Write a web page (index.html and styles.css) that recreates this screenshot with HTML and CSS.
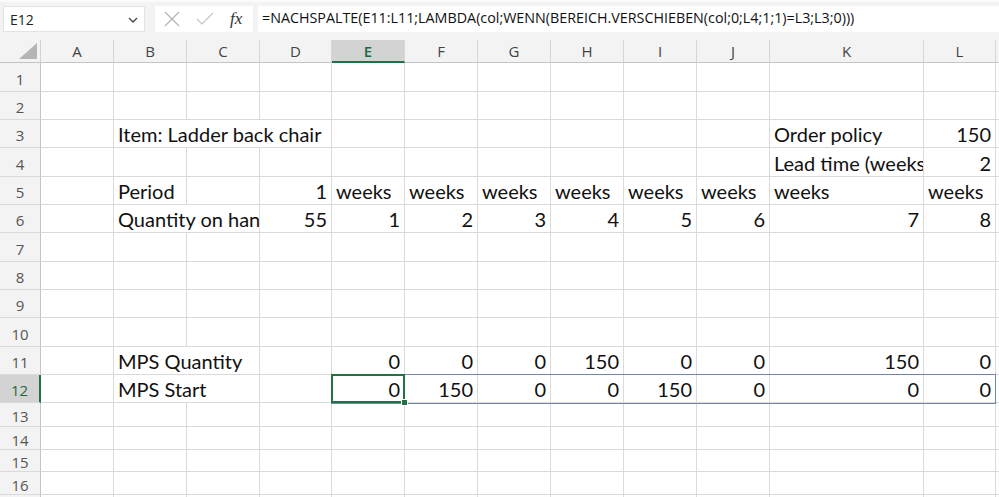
FILE: index.html
```html
<!DOCTYPE html>
<html lang="de">
<head>
<meta charset="utf-8">
<title>Excel</title>
<link rel="stylesheet" href="styles.css">
</head>
<body>
<div class="fbar">
  <div class="namebox">
    <span class="nb-text">E12</span>
    <svg class="chev" width="10" height="6" viewBox="0 0 10 6"><path d="M1 1 L5 5 L9 1" fill="none" stroke="#444" stroke-width="1.3"/></svg>
  </div>
  <div class="fxbox">
    <svg class="ico" width="16" height="16" viewBox="0 0 16 16"><path d="M1 1 L15 15 M15 1 L1 15" stroke="#b3b3b3" stroke-width="1.2" fill="none"/></svg>
    <svg class="ico" width="18" height="14" viewBox="0 0 18 14"><path d="M1 7 L6 12 L17 1" stroke="#c4c4c4" stroke-width="1.2" fill="none"/></svg>
    <span class="fx">fx</span>
  </div>
  <div class="formula">=NACHSPALTE(E11:L11;LAMBDA(col;WENN(BEREICH.VERSCHIEBEN(col;0;L4;1;1)=L3;L3;0)))</div>
</div>
<div class="sheet">
  <!-- header -->
  <div class="corner"><svg width="18" height="16" viewBox="0 0 18 16"><path d="M18 0 L18 16 L0 16 Z" fill="#b5b5b5"/></svg></div>
  <div class="ch">A</div><div class="ch">B</div><div class="ch">C</div><div class="ch">D</div>
  <div class="ch ch-sel">E</div><div class="ch">F</div><div class="ch">G</div><div class="ch">H</div>
  <div class="ch">I</div><div class="ch">J</div><div class="ch">K</div><div class="ch">L</div><div class="ch ch-end"></div>

  <!-- row 1 -->
  <div class="rh">1</div>
  <div class="c"></div><div class="c"></div><div class="c"></div><div class="c"></div><div class="c"></div><div class="c"></div>
  <div class="c"></div><div class="c"></div><div class="c"></div><div class="c"></div><div class="c"></div><div class="c"></div><div class="c e"></div>

  <!-- row 2 -->
  <div class="rh">2</div>
  <div class="c"></div><div class="c"></div><div class="c"></div><div class="c"></div><div class="c"></div><div class="c"></div>
  <div class="c"></div><div class="c"></div><div class="c"></div><div class="c"></div><div class="c"></div><div class="c"></div><div class="c e"></div>

  <!-- row 3 -->
  <div class="rh">3</div>
  <div class="c"></div><div class="c s3">Item: Ladder back chair</div>
  <div class="c"></div><div class="c"></div><div class="c"></div><div class="c"></div><div class="c"></div><div class="c"></div>
  <div class="c">Order policy</div><div class="c n">150</div><div class="c e"></div>

  <!-- row 4 -->
  <div class="rh">4</div>
  <div class="c"></div><div class="c"></div><div class="c"></div><div class="c"></div><div class="c"></div><div class="c"></div>
  <div class="c"></div><div class="c"></div><div class="c"></div><div class="c"></div>
  <div class="c">Lead time (weeks)</div><div class="c n">2</div><div class="c e"></div>

  <!-- row 5 -->
  <div class="rh">5</div>
  <div class="c"></div><div class="c">Period</div><div class="c"></div><div class="c n">1</div>
  <div class="c">weeks</div><div class="c">weeks</div><div class="c">weeks</div><div class="c">weeks</div>
  <div class="c">weeks</div><div class="c">weeks</div><div class="c">weeks</div><div class="c">weeks</div><div class="c e"></div>

  <!-- row 6 -->
  <div class="rh">6</div>
  <div class="c"></div><div class="c s2">Quantity on hand</div><div class="c n">55</div>
  <div class="c n">1</div><div class="c n">2</div><div class="c n">3</div><div class="c n">4</div>
  <div class="c n">5</div><div class="c n">6</div><div class="c n">7</div><div class="c n">8</div><div class="c e"></div>

  <!-- row 7 -->
  <div class="rh">7</div>
  <div class="c"></div><div class="c"></div><div class="c"></div><div class="c"></div><div class="c"></div><div class="c"></div>
  <div class="c"></div><div class="c"></div><div class="c"></div><div class="c"></div><div class="c"></div><div class="c"></div><div class="c e"></div>

  <!-- row 8 -->
  <div class="rh">8</div>
  <div class="c"></div><div class="c"></div><div class="c"></div><div class="c"></div><div class="c"></div><div class="c"></div>
  <div class="c"></div><div class="c"></div><div class="c"></div><div class="c"></div><div class="c"></div><div class="c"></div><div class="c e"></div>

  <!-- row 9 -->
  <div class="rh">9</div>
  <div class="c"></div><div class="c"></div><div class="c"></div><div class="c"></div><div class="c"></div><div class="c"></div>
  <div class="c"></div><div class="c"></div><div class="c"></div><div class="c"></div><div class="c"></div><div class="c"></div><div class="c e"></div>

  <!-- row 10 -->
  <div class="rh">10</div>
  <div class="c"></div><div class="c"></div><div class="c"></div><div class="c"></div><div class="c"></div><div class="c"></div>
  <div class="c"></div><div class="c"></div><div class="c"></div><div class="c"></div><div class="c"></div><div class="c"></div><div class="c e"></div>

  <!-- row 11 -->
  <div class="rh">11</div>
  <div class="c"></div><div class="c s2">MPS Quantity</div><div class="c"></div>
  <div class="c n">0</div><div class="c n">0</div><div class="c n">0</div><div class="c n">150</div>
  <div class="c n">0</div><div class="c n">0</div><div class="c n">150</div><div class="c n">0</div><div class="c e"></div>

  <!-- row 12 -->
  <div class="rh rh-sel">12</div>
  <div class="c"></div><div class="c s2">MPS Start</div><div class="c"></div>
  <div class="c n active">0<span class="spill"></span><span class="sel"></span><span class="handle"></span></div>
  <div class="c n">150</div><div class="c n">0</div><div class="c n">0</div>
  <div class="c n">150</div><div class="c n">0</div><div class="c n">0</div><div class="c n">0</div><div class="c e"></div>

  <!-- row 13 -->
  <div class="rh">13</div>
  <div class="c"></div><div class="c"></div><div class="c"></div><div class="c"></div><div class="c"></div><div class="c"></div>
  <div class="c"></div><div class="c"></div><div class="c"></div><div class="c"></div><div class="c"></div><div class="c"></div><div class="c e"></div>

  <!-- row 14 -->
  <div class="rh">14</div>
  <div class="c"></div><div class="c"></div><div class="c"></div><div class="c"></div><div class="c"></div><div class="c"></div>
  <div class="c"></div><div class="c"></div><div class="c"></div><div class="c"></div><div class="c"></div><div class="c"></div><div class="c e"></div>

  <!-- row 15 -->
  <div class="rh">15</div>
  <div class="c"></div><div class="c"></div><div class="c"></div><div class="c"></div><div class="c"></div><div class="c"></div>
  <div class="c"></div><div class="c"></div><div class="c"></div><div class="c"></div><div class="c"></div><div class="c"></div><div class="c e"></div>

  <!-- row 16 -->
  <div class="rh">16</div>
  <div class="c"></div><div class="c"></div><div class="c"></div><div class="c"></div><div class="c"></div><div class="c"></div>
  <div class="c"></div><div class="c"></div><div class="c"></div><div class="c"></div><div class="c"></div><div class="c"></div><div class="c e"></div>

  <!-- row 17 (only its top edge is in view) -->
  <div class="rh"></div>
  <div class="c"></div><div class="c"></div><div class="c"></div><div class="c"></div><div class="c"></div><div class="c"></div>
  <div class="c"></div><div class="c"></div><div class="c"></div><div class="c"></div><div class="c"></div><div class="c"></div><div class="c e"></div>
</div>
</body>
</html>
```
FILE: styles.css
```css
html, body {
  margin: 0;
  padding: 0;
}
body {
  width: 999px;
  height: 497px;
  overflow: hidden;
  background: #ffffff;
  font-family: Lato, "Liberation Sans", sans-serif;
}

/* formula bar */
.fbar {
  height: 40px;
  box-sizing: border-box;
  background: #f3f3f3;
  border-top: 2px solid #fbfbfb;
  padding: 4px 0 0 3px;
  display: flex;
  align-items: flex-start;
}
.namebox {
  width: 142px;
  height: 26px;
  box-sizing: border-box;
  background: #fff;
  border: 1px solid #e3e3e3;
  display: flex;
  align-items: center;
  justify-content: space-between;
  padding: 0 6px 0 6px;
}
.nb-text {
  font-family: "Open Sans", "Noto Sans", sans-serif;
  font-size: 14px;
  color: #222;
}
.chev {
  margin-top: 2px;
}
.fxbox {
  margin-left: 10px;
  width: 98px;
  height: 26px;
  box-sizing: border-box;
  background: #fff;
  display: flex;
  align-items: center;
  padding-left: 9px;
  gap: 16px;
}
.fx {
  font-family: "Liberation Serif", serif;
  font-style: italic;
  font-size: 17px;
  color: #333;
}
.formula {
  margin-left: 5px;
  flex: 1;
  height: 26px;
  box-sizing: border-box;
  background: #fff;
  padding-left: 4px;
  font-family: "Open Sans", "Noto Sans", sans-serif;
  font-size: 14.3px;
  line-height: 24px;
  color: #111;
  white-space: nowrap;
  overflow: hidden;
}

/* sheet grid */
.sheet {
  display: grid;
  grid-template-columns: 41px 73px 73px 73px 72px 73px 73px 73px 73px 73px 73px 154px 72px 1fr;
  grid-template-rows: 23px 29px 28px 28px 29px 28px 28px 29px 28px 28px 29px 28px 28px 24px 23px 22px 23px 23px;
}
.corner {
  background: #f3f3f3;
  border-right: 1px solid #d2d2d2;
  border-bottom: 1px solid #c4c4c4;
  display: flex;
  align-items: flex-end;
  justify-content: flex-end;
  padding: 0 3px 3px 0;
}
.ch {
  background: #f3f3f3;
  border-right: 1px solid #d6d6d6;
  border-bottom: 1px solid #c4c4c4;
  display: flex;
  align-items: center;
  justify-content: center;
  font-family: "Open Sans", "Noto Sans", sans-serif;
  font-size: 15px;
  color: #444;
}
.ch-sel {
  background: #d3d3d3;
  color: #1e6b42;
  font-weight: 600;
  border-bottom: 2px solid #217346;
}
.ch-end {
  border-right: none;
}
.rh {
  background: #f3f3f3;
  border-right: 1px solid #c4c4c4;
  border-bottom: 1px solid #dadada;
  display: flex;
  align-items: center;
  justify-content: center;
  font-family: "Open Sans", "Noto Sans", sans-serif;
  font-size: 15px;
  color: #555;
  padding-top: 3px;
}
.rh-sel {
  background: #d3d3d3;
  color: #1e6b42;
  border-right: 2px solid #217346;
}
.c {
  border-right: 1px solid #dadada;
  border-bottom: 1px solid #dadada;
  display: flex;
  align-items: flex-end;
  padding: 0 4px 1px 4px;
  font-size: 20px;
  line-height: 24px;
  color: #111;
  white-space: nowrap;
  overflow: hidden;
  min-width: 0;
}
.n {
  justify-content: flex-end;
}
.e {
  border-right: none;
}
.s2 {
  grid-column: span 2;
}
.s3 {
  grid-column: span 3;
}

/* selection overlays */
.active {
  position: relative;
  overflow: visible;
}
.spill {
  position: absolute;
  left: -1px;
  top: -1px;
  width: 665px;
  height: 30px;
  box-sizing: border-box;
  border: 1px solid #6f86a6;
  pointer-events: none;
}
.sel {
  position: absolute;
  left: -1px;
  top: -1px;
  right: -1px;
  bottom: -1px;
  border: 2px solid #217346;
  pointer-events: none;
}
.handle {
  position: absolute;
  right: -4px;
  bottom: -4px;
  width: 5px;
  height: 5px;
  background: #217346;
  border: 1px solid #ffffff;
}
```
